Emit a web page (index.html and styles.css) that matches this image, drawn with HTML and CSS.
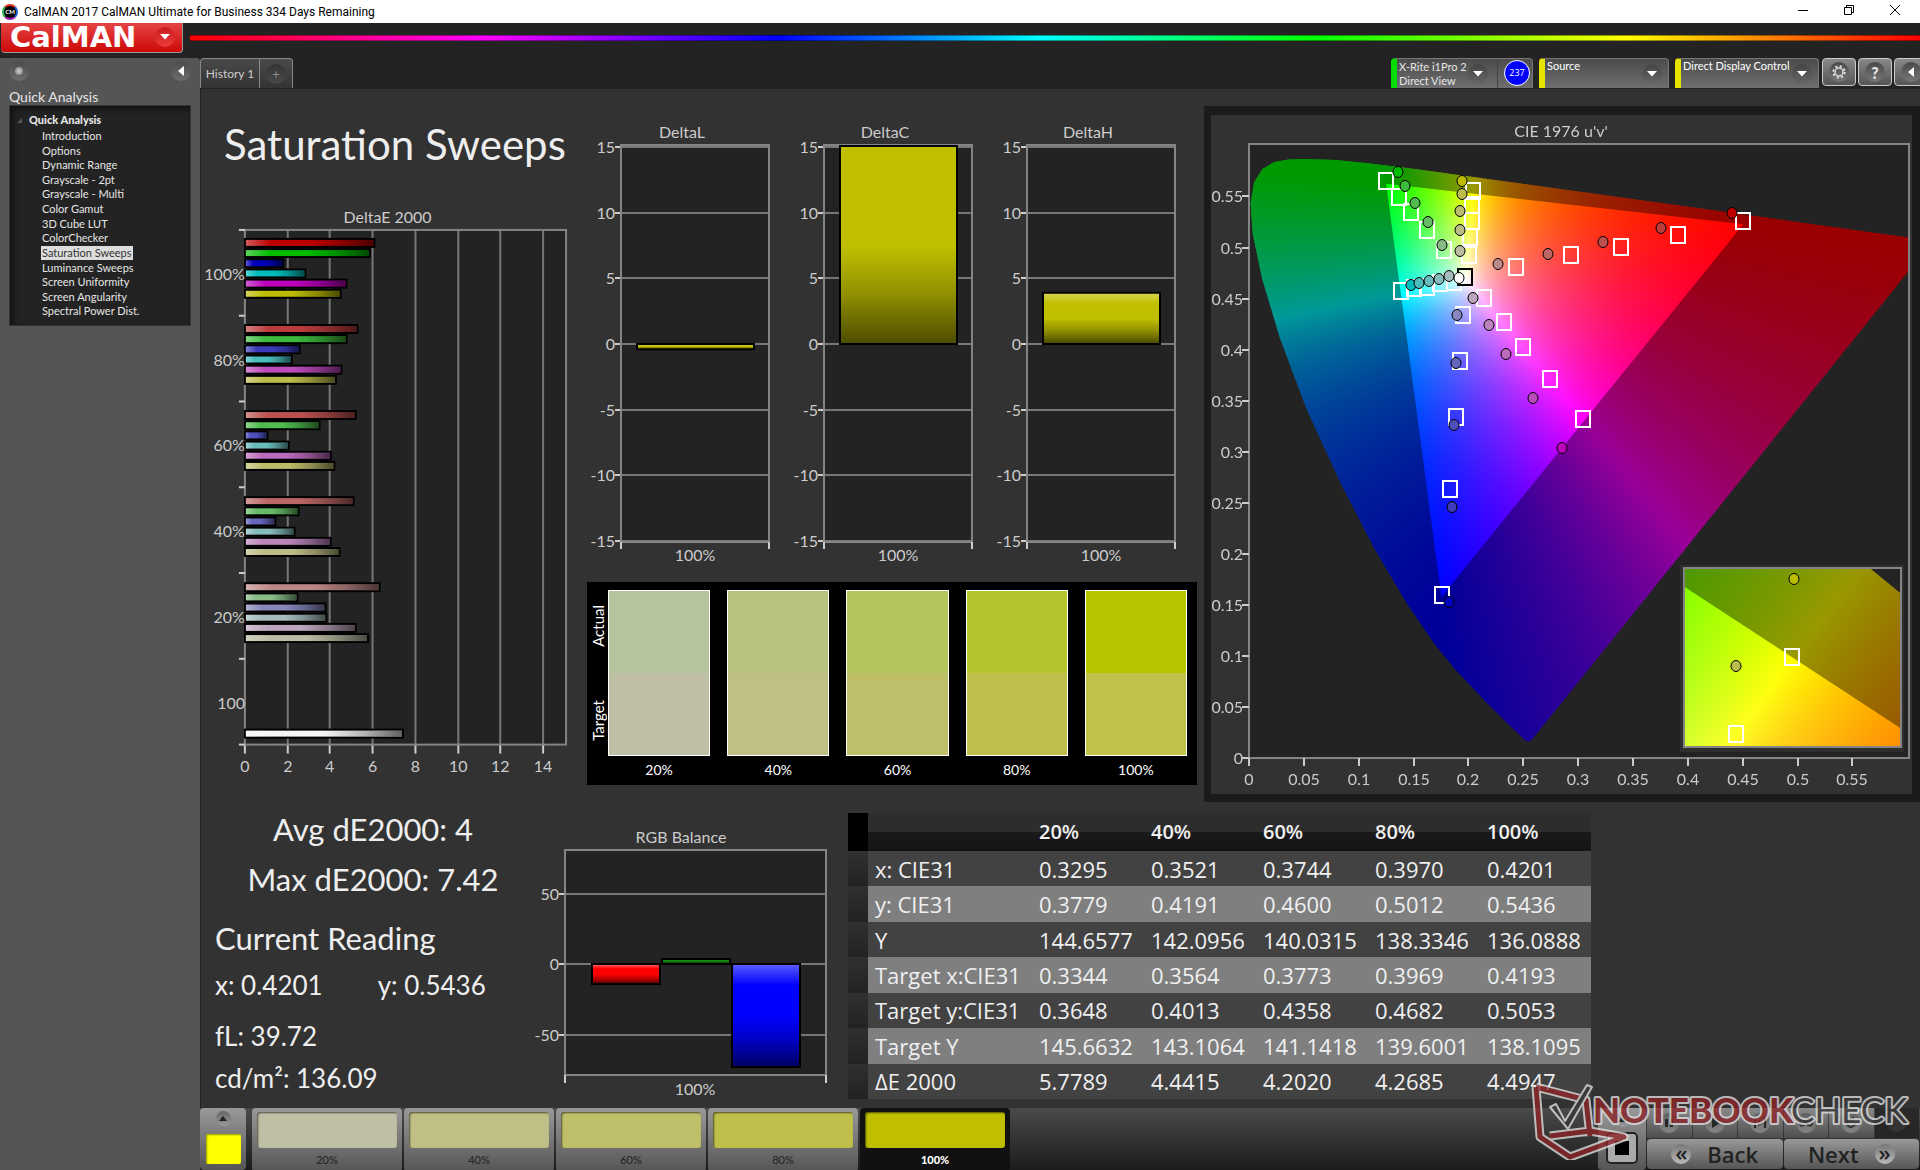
FILE: index.html
```html
<!DOCTYPE html>
<html lang="en">
<head>
<meta charset="utf-8">
<title>CalMAN 2017 CalMAN Ultimate for Business</title>
<link rel="stylesheet" href="styles.css">
</head>
<body>
<header class="titlebar">
  <span class="app-icon">CM</span>
  <span class="titlebar-text">CalMAN 2017 CalMAN Ultimate for Business 334 Days Remaining</span>
  <div class="window-controls">
    <button aria-label="Minimize"><svg width="12" height="12" viewBox="0 0 12 12"><path d="M1 6.500h10"/></svg></button>
    <button aria-label="Restore"><svg width="12" height="12" viewBox="0 0 12 12"><path d="M1.500 3.500h7v7h-7zM3.500 3.500v-2h7v7h-2"/></svg></button>
    <button aria-label="Close"><svg width="12" height="12" viewBox="0 0 12 12"><path d="M1 1l10 10M11 1L1 11"/></svg></button>
  </div>
</header>

<div class="brandbar">
  <button class="brand"><span>CalMAN</span><span class="round brand-arrow"><svg width="10" height="6" viewBox="0 0 10 6"><path d="M0 0h10L5 5.500z"/></svg></span></button>
  <div class="rainbow"></div>
</div>

<div class="shell">
  <nav class="sidebar" aria-label="Workflow">
    <div class="sidebar-top">
      <span class="round dot"><i></i></span>
      <button class="round" aria-label="Collapse"><svg width="6" height="10" viewBox="0 0 6 10"><path d="M6 0v10L0 5z"/></svg></button>
    </div>
    <h2>Quick Analysis</h2>
    <div class="tree">
      <a class="tree-root" href="#"><svg width="5" height="5" viewBox="0 0 5 5"><path d="M5 0v5H0z"/></svg>Quick Analysis</a>
      <ul>
        <li><a href="#">Introduction</a></li>
        <li><a href="#">Options</a></li>
        <li><a href="#">Dynamic Range</a></li>
        <li><a href="#">Grayscale - 2pt</a></li>
        <li><a href="#">Grayscale - Multi</a></li>
        <li><a href="#">Color Gamut</a></li>
        <li><a href="#">3D Cube LUT</a></li>
        <li><a href="#">ColorChecker</a></li>
        <li><a href="#" class="current">Saturation Sweeps</a></li>
        <li><a href="#">Luminance Sweeps</a></li>
        <li><a href="#">Screen Uniformity</a></li>
        <li><a href="#">Screen Angularity</a></li>
        <li><a href="#">Spectral Power Dist.</a></li>
      </ul>
    </div>
  </nav>

  <div class="work">
    <div class="toolbar">
      <div class="tabs">
        <button class="tab">History 1</button>
        <button class="tab tab-add" aria-label="Add history"><span class="round">+</span></button>
      </div>
      <div class="devices">
        <div class="device meter">
          <button class="device-pick">X-Rite i1Pro 2<br>Direct View<span class="round pick-arrow"><svg width="10" height="6" viewBox="0 0 10 6"><path d="M0 0h10L5 5.500z"/></svg></span></button>
          <span class="badge">237</span>
        </div>
        <label class="device source">
          <select aria-label="Source"><option>Source</option></select>
          <span class="round pick-arrow"><svg width="10" height="6" viewBox="0 0 10 6"><path d="M0 0h10L5 5.500z"/></svg></span>
        </label>
        <label class="device display">
          <select aria-label="Direct Display Control"><option>Direct Display Control</option></select>
          <span class="round pick-arrow"><svg width="10" height="6" viewBox="0 0 10 6"><path d="M0 0h10L5 5.500z"/></svg></span>
        </label>
        <button class="tool" aria-label="Settings"><span class="round"><svg width="14" height="14" viewBox="-7 -7 14 14"><g fill="none" stroke="#ddd"><circle r="4" stroke-width="1.500"/><circle r="5.700" stroke-width="2" stroke-dasharray="2.200 2.276"/></g></svg></span></button>
        <button class="tool" aria-label="Help"><span class="round">?</span></button>
        <button class="tool" aria-label="Collapse panel"><span class="round"><svg width="6" height="10" viewBox="0 0 6 10"><path d="M6 0v10L0 5z"/></svg></span></button>
      </div>
    </div>

    <main>
      <div class="top-row">
        <section class="errors">
          <h1>Saturation Sweeps</h1>
          <svg id="delta-e" class="chart" viewBox="0 0 386 590"></svg>
        </section>
        <section class="deltas">
          <div class="delta-row">
            <svg id="delta-l" class="chart" viewBox="0 0 203 458"></svg>
            <svg id="delta-c" class="chart" viewBox="0 0 203 458"></svg>
            <svg id="delta-h" class="chart" viewBox="0 0 203 458"></svg>
          </div>
          <div class="swatches">
            <div class="swatch-side"><span>Actual</span><span>Target</span></div>
            <figure><div class="pair s20"></div><figcaption>20%</figcaption></figure>
            <figure><div class="pair s40"></div><figcaption>40%</figcaption></figure>
            <figure><div class="pair s60"></div><figcaption>60%</figcaption></figure>
            <figure><div class="pair s80"></div><figcaption>80%</figcaption></figure>
            <figure><div class="pair s100"></div><figcaption>100%</figcaption></figure>
          </div>
        </section>
        <section class="cie">
          <canvas id="gamut" width="701" height="679"></canvas>
          <svg id="cie-marks" class="chart" viewBox="0 0 701 679"></svg>
        </section>
      </div>

      <div class="bottom-row">
        <section class="readings">
          <p class="big centered">Avg dE2000: 4</p>
          <p class="big centered">Max dE2000: 7.42</p>
          <h2 class="big">Current Reading</h2>
          <p class="xy"><span>x: 0.4201</span><span>y: 0.5436</span></p>
          <p class="luma">fL: 39.72</p>
          <p class="cd">cd/m²: 136.09</p>
        </section>
        <svg id="rgb" class="chart" viewBox="0 0 303 306"></svg>
        <table>
          <thead><tr><th class="handle"></th><th></th><th>20%</th><th>40%</th><th>60%</th><th>80%</th><th>100%</th></tr></thead>
          <tbody>
            <tr><td class="handle"></td><th>x: CIE31</th><td>0.3295</td><td>0.3521</td><td>0.3744</td><td>0.3970</td><td>0.4201</td></tr>
            <tr><td class="handle"></td><th>y: CIE31</th><td>0.3779</td><td>0.4191</td><td>0.4600</td><td>0.5012</td><td>0.5436</td></tr>
            <tr><td class="handle"></td><th>Y</th><td>144.6577</td><td>142.0956</td><td>140.0315</td><td>138.3346</td><td>136.0888</td></tr>
            <tr><td class="handle"></td><th>Target x:CIE31</th><td>0.3344</td><td>0.3564</td><td>0.3773</td><td>0.3969</td><td>0.4193</td></tr>
            <tr><td class="handle"></td><th>Target y:CIE31</th><td>0.3648</td><td>0.4013</td><td>0.4358</td><td>0.4682</td><td>0.5053</td></tr>
            <tr><td class="handle"></td><th>Target Y</th><td>145.6632</td><td>143.1064</td><td>141.1418</td><td>139.6001</td><td>138.1095</td></tr>
            <tr><td class="handle"></td><th>ΔE 2000</th><td>5.7789</td><td>4.4415</td><td>4.2020</td><td>4.2685</td><td>4.4947</td></tr>
          </tbody>
        </table>
      </div>
    </main>

    <footer class="dock">
      <button class="pattern" aria-label="Pattern window"><span class="round"><svg width="8" height="5" viewBox="0 0 8 5"><path d="M4 0l4 5H0z"/></svg></span><i></i></button>
      <div class="levels">
        <button class="level l20"><i></i>20%</button>
        <button class="level l40"><i></i>40%</button>
        <button class="level l60"><i></i>60%</button>
        <button class="level l80"><i></i>80%</button>
        <button class="level l100"><i></i>100%</button>
      </div>
      <div class="transport">
        <button class="stop" aria-label="Stop"><span class="round"><svg width="8" height="5" viewBox="0 0 8 5"><path d="M4 0l4 5H0z"/></svg></span><i></i></button>
        <div class="steps">
          <div class="icons">
            <button aria-label="Pause"><span class="round"><svg width="12" height="12" viewBox="0 0 12 12"><path d="M2 2h3v8H2zM7 2h3v8H7z"/></svg></span></button>
            <button aria-label="Play"><span class="round"><svg width="12" height="12" viewBox="0 0 12 12"><path d="M3 1l8 5-8 5z"/></svg></span></button>
            <button aria-label="Read series"><span class="round"><svg width="12" height="12" viewBox="0 0 12 12"><path d="M0 1h2v10H0zM10 1h2v10h-2zM4 3l5 3-5 3z"/></svg></span></button>
            <button aria-label="Read continuously"><span class="round"><svg width="14" height="8" viewBox="0 0 14 8"><path d="M7 4C5 1 1 0 1 4s4 3 6 0 6-4 6 0-4 3-6 0z" fill="none" stroke="#333" stroke-width="2"/></svg></span></button>
            <button aria-label="Repeat"><span class="round"><svg width="12" height="12" viewBox="0 0 12 12"><path d="M10 6a4 4 0 1 1-2-3.500M8 0v4H5" fill="none" stroke="#333" stroke-width="2"/></svg></span></button>
            <button aria-label="Unavailable" disabled><span class="round"></span></button>
          </div>
          <div class="moves">
            <button><span class="round">«</span>Back</button>
            <button>Next<span class="round">»</span></button>
          </div>
        </div>
      </div>
      <svg class="watermark" width="390" height="80" viewBox="0 0 390 80" aria-label="Notebookcheck">
        <g fill="none" stroke-linejoin="round">
          <g stroke="#ddd" stroke-width="9"><path d="M10 7l50 13 4 36M10 7l4 50 30 20 54-20-34-6-40 5"/></g>
          <g stroke="#8c2529" stroke-width="5"><path d="M10 7l50 13 4 36M10 7l4 50 30 20 54-20-34-6-40 5"/></g>
          <path d="M24 27l6-3 9 17L61 5l5 2-24 42z" fill="#3a3a3a" stroke="#ddd" stroke-width="2"/>
        </g>
        <text class="wm-note" x="67" y="43">NOTEBOOK</text>
        <text class="wm-check" x="265" y="43">CHECK</text>
      </svg>
    </footer>
  </div>
</div>
<script src="charts.js"></script>
</body>
</html>
```

FILE: styles.css
```css
* { box-sizing: border-box; }

body {
  margin: 0;
  min-height: 100vh;
  display: flex;
  flex-direction: column;
  overflow-x: hidden;
  background: #232323;
  color: #e6e6e6;
  font: 12px/15px Lato, "Open Sans", sans-serif;
}

button, select {
  margin: 0;
  padding: 0;
  border: 0;
  background: none;
  color: inherit;
  font: inherit;
}

h1, h2, p, ul, figure { margin: 0; padding: 0; font-weight: 400; }
a { color: inherit; text-decoration: none; }
svg { display: block; fill: #fff; }

.round {
  display: inline-flex;
  align-items: center;
  justify-content: center;
  flex: none;
  width: 20px;
  height: 20px;
  border-radius: 50%;
  background: linear-gradient(#4a4a4a, #777);
}

/* Window title bar */
.titlebar {
  display: flex;
  align-items: center;
  height: 23px;
  background: #fff;
  color: #000;
  font: 12px/20px Roboto, "Open Sans", sans-serif;
}
.app-icon {
  width: 16px;
  height: 16px;
  margin: 0 6px 0 2px;
  border: 2px solid;
  border-color: #e0301e #1a62d6 #a21caf #33b249;
  border-radius: 50%;
  background: #000;
  color: #fff;
  font: bold 6px/12px Lato, sans-serif;
  text-align: center;
}
.window-controls { display: flex; margin: 0 19px 3px auto; gap: 34px; }
.window-controls svg { fill: none; stroke: #000; }

/* Brand strip */
.brandbar { display: flex; height: 35px; }
.brand {
  display: flex;
  align-items: center;
  justify-content: space-between;
  width: 182px;
  height: 30px;
  margin-left: 1px;
  padding: 0 7px 2px 9px;
  border: solid #999;
  border-width: 0 1px 1px 0;
  border-radius: 0 0 4px 4px;
  background: linear-gradient(#e64444, #cc0808);
  color: #fff;
  font: bold 29px/28px "DejaVu Sans", sans-serif;
}
.brand-arrow { background: linear-gradient(#c81d1d, #ee3c3c); }
.rainbow {
  flex: 1;
  height: 6px;
  margin: 12px 0 0 7px;
  border: solid rgba(0, 0, 0, .4);
  border-width: 1px 0;
  background: linear-gradient(90deg, #f00, #f0f 17%, #00f 34%, #0ff 49%, #0f0 65%, #ff0 83%, #f00);
}

/* Sidebar */
.shell { display: flex; flex: 1; }
.sidebar { flex: none; width: 200px; padding: 3px 9px; background: #555; border-radius: 0 4px 0 0; }
.sidebar-top { display: flex; justify-content: space-between; height: 27px; }
.sidebar-top .round { background: linear-gradient(#4b4b4b, #6d6d6d); }
.dot i { width: 8px; height: 8px; border-radius: 50%; background: radial-gradient(#ccc, #777); }
.sidebar h2 { font-size: 14px; line-height: 17px; }
.tree {
  height: 221px;
  padding: 7px 6px;
  border: 1px solid #333;
  background: #232323;
  box-shadow: inset 3px 3px 6px #111;
}
.tree-root { display: flex; align-items: center; gap: 7px; padding-left: 1px; font-weight: 900; font-size: 11px; line-height: 14px; }
.tree-root svg { fill: #555; }
.tree ul { display: grid; grid-auto-rows: 1fr; height: 190px; margin-top: 2px; padding-left: 25px; list-style: none; font-size: 11px; line-height: 14px; }
.tree li a { display: inline-block; padding: 0 1px; }
.tree .current { background: #ddd; color: #333; }

/* Toolbar */
.work { display: flex; flex: 1; flex-direction: column; min-width: 0; }
.toolbar { display: flex; justify-content: space-between; height: 30px; overflow: hidden; }
.tabs, .devices { display: flex; }
.tab {
  width: 60px;
  border: solid #888;
  border-width: 1px 1px 0;
  border-radius: 4px 0 0 0;
  background: linear-gradient(#4a4a4a, #333);
  color: #ccc;
  font-size: 12px;
}
.tab-add { width: 33px; border-left: 0; border-radius: 0 4px 0 0; color: #888; }
.tab-add .round { background: linear-gradient(#333, #4a4a4a); font-size: 14px; }
.devices { margin-right: -10px; }
.device {
  display: flex;
  position: relative;
  margin-right: 6px;
  border: solid #777;
  border-width: 1px 1px 0;
  border-left: 6px solid #e5e500;
  border-radius: 4px 4px 0 0;
  background: linear-gradient(#4c4c4c, #6e6e6e);
  font-size: 11px;
  line-height: 14px;
}
.meter { width: 142px; border-left-color: #0d0; }
.source { width: 130px; }
.display { width: 144px; margin-right: 3px; }
.device-pick { width: 101px; padding-left: 2px; border-right: 1px solid #444; text-align: left; }
.device select { width: 100%; height: 14px; padding-left: 2px; appearance: none; color: #fff; }
.pick-arrow { position: absolute; top: 5px; right: 6px; background: linear-gradient(#444, #666); }
.meter .pick-arrow { right: 44px; }
.badge {
  width: 26px;
  height: 26px;
  margin: 1px 0 0 6px;
  border: 1px solid #fff;
  border-radius: 50%;
  background: #00f;
  color: #fff;
  font: 9px/24px "Open Sans", sans-serif;
  text-align: center;
}
.tool {
  width: 34px;
  height: 28px;
  margin-right: 2px;
  border: 1px solid #ccc;
  border-radius: 4px;
  background: linear-gradient(#888, #555);
  font-size: 16px;
  font-weight: 900;
}

/* Workspace */
main { flex: 1; border: solid #222; border-width: 1px 0 0 1px; background: #323232; }
.top-row { display: grid; grid-template-columns: 385fr 618fr 716fr; align-items: start; }
.chart { width: 100%; height: auto; overflow: visible; font-size: 16px; }
h1 { height: 116px; padding: 24px 0 0 23px; color: #eee; font-size: 42px; line-height: 62px; white-space: nowrap; }
.deltas { padding: 29px 7px 0 1px; }
.delta-row { display: grid; grid-template-columns: repeat(3, 1fr); margin: 0 2px 6px -1px; }
.swatches { display: flex; height: 203px; padding: 8px 10px 0 2px; background: #000; color: #fff; }
.swatch-side { display: flex; flex: none; width: 19px; height: 166px; padding: 15px 0; flex-direction: column; justify-content: space-between; }
.swatch-side span { writing-mode: vertical-rl; transform: rotate(180deg); font-size: 15px; line-height: 19px; }
.swatches figure { flex: 1; text-align: center; }
.swatches figure + figure { margin-left: 17px; }
.pair { height: 166px; border: 1px solid #fff; }
figcaption { font-size: 14px; line-height: 28px; }
.s20 { background: linear-gradient(#b4c49e 50%, #bfbfa5 50%); }
.s40 { background: linear-gradient(#b5c37e 50%, #bfbf86 50%); }
.s60 { background: linear-gradient(#b3c45d 50%, #bfbf6a 50%); }
.s80 { background: linear-gradient(#b4c42c 50%, #bfc04b 50%); }
.s100 { background: linear-gradient(#b7c500 50%, #c1c249 50%); }

.cie {
  display: grid;
  margin-top: 17px;
  border: solid #1b1b1b;
  border-width: 9px 8px 8px 7px;
}
.cie canvas, .cie svg { grid-area: 1 / 1; width: 100%; }

.bottom-row { display: grid; grid-template-columns: 344fr 303fr 743fr 329fr; align-items: start; }
.readings { padding: 7px 0 0 14px; color: #eee; font-size: 26px; line-height: 40px; white-space: nowrap; }
.big { font-size: 31px; margin-bottom: 10px; }
.centered { width: 316px; text-align: center; }
.readings h2 { margin: 19px 0 7px; }
.xy { display: flex; gap: 55px; }
.luma { margin: 11px 0 2px; }

table {
  width: 100%;
  height: 286px;
  margin-top: 11px;
  border-collapse: collapse;
  table-layout: fixed;
  background: #424242;
  color: #f0f0f0;
  font: 22px/30px "Open Sans", sans-serif;
}
thead { background: linear-gradient(#2d2d2d 50%, #1a1a1a 50%, #141414); font-size: 20px; }
thead tr { height: 38px; }
th, td { padding: 0; font-weight: 400; text-align: left; white-space: nowrap; }
thead th:nth-child(n+3) { width: 112px; font-weight: 600; }
thead .handle { width: 20px; background: #000; }
thead th:nth-child(2) { width: 171px; }
thead th:last-child { width: 104px; }
tbody th { padding-left: 7px; }
tbody tr:nth-child(even) { background: #7f7f7f; }
.handle { background: linear-gradient(#303030, #222); }

/* Bottom dock */
.dock { position: relative; display: flex; height: 62px; background: linear-gradient(#4a4a4a, #1c1c1c); }
.dock button { border-radius: 4px; background: linear-gradient(#999, #555); color: #222; }
.dock .round { background: linear-gradient(#666, #999); }
.dock .round svg { fill: #222; }
.pattern { display: flex; flex-direction: column; align-items: center; gap: 8px; width: 46px; margin-right: 6px; padding-top: 3px; }
.pattern .round, .stop .round { width: 15px; height: 15px; }
.pattern i { width: 35px; height: 30px; border-radius: 2px; background: #ff0; box-shadow: inset 1px 1px 2px #990; }
.levels { display: grid; grid-template-columns: repeat(5, 150px); gap: 2px; }
.level { padding: 4px 5px 5px; font-size: 11px; }
.level i { display: block; height: 36px; margin-bottom: 4px; border-radius: 3px; box-shadow: inset 1px 1px 2px rgba(0, 0, 0, .6); }
.l20 i { background: #bfbfa5; }
.l40 i { background: #bfbf86; }
.l60 i { background: #bfbf6a; }
.l80 i { background: #bfc04b; }
.l100 i { background: #bfbf00; }
.dock .l100 { background: #111; color: #fff; font-weight: 900; }
.transport { display: flex; margin: 0 1px 0 auto; gap: 1px; }
.stop { display: flex; flex-direction: column; align-items: center; gap: 6px; width: 48px; padding-top: 4px; }
.stop i { width: 30px; height: 30px; border: 8px solid #aaa; outline: 2px solid #222; outline-offset: -1px; border-radius: 4px; background: #000; }
.steps { display: grid; grid-template-rows: 30px 30px; gap: 1px; width: 272px; }
.icons { display: grid; grid-template-columns: repeat(6, 1fr); gap: 1px; }
.icons button { opacity: .8; border-radius: 0; }
.dock .icons button:disabled { background: #222; }
.icons button:disabled .round { background: #333; }
.moves { display: grid; grid-template-columns: 1fr 1fr; gap: 1px; }
.moves button { display: flex; align-items: center; justify-content: center; gap: 16px; font: 600 22px/28px "Open Sans", sans-serif; }
.moves .round { padding-bottom: 4px; background: linear-gradient(#777, #bbb); }
.watermark { position: absolute; right: 4px; bottom: 10px; opacity: .8; pointer-events: none; }
.watermark text { paint-order: stroke; stroke: #ddd; stroke-width: 4px; stroke-linejoin: round; }
.wm-note { fill: #8c2529; font: 900 35px Lato, sans-serif; }
.wm-check { fill: #3a3a3a; font: 400 35px Lato, sans-serif; }

/* Charts */
.plot { fill: #232323; }
.frame { fill: none; stroke: #848484; stroke-width: 2; }
.grid { stroke: #777; stroke-width: 2; }
.tick { stroke: #ccc; stroke-width: 2; }
.label { fill: #ccc; }
.bar { stroke: #000; stroke-width: 2; }
.target { fill: none; stroke: #fff; stroke-width: 2; }
.target.white { stroke: #000; }
.reading { stroke: #000; stroke-width: 1; }
```

FILE: charts.js
```js
const NS = 'http://www.w3.org/2000/svg';

function add(parent, tag, attrs, text) {
  const el = document.createElementNS(NS, tag);
  for (const key in attrs) el.setAttribute(key, attrs[key]);
  if (text !== undefined) el.textContent = text;
  parent.appendChild(el);
  return el;
}
const line = (s, c, x1, y1, x2, y2) => add(s, 'line', { class: c, x1, y1, x2, y2 });
const label = (s, x, y, text, anchor) =>
  add(s, 'text', { class: 'label', x, y, 'text-anchor': anchor || 'middle' }, text);

// Glossy shading laid over the flat bar colour
function gloss(svg, id, vertical, light) {
  const g = add(svg, 'linearGradient', { id, x1: 0, y1: 0, x2: vertical ? 0 : 1, y2: vertical ? 1 : 0 });
  [[0, '#fff', light], [0.2, '#fff', 0], [0.5, '#000', 0], [0.75, '#000', 0.25], [1, '#000', 0.6]].forEach(
    ([offset, color, opacity]) => add(g, 'stop', { offset, 'stop-color': color, 'stop-opacity': opacity }));
}
function bar(svg, x, y, width, height, color, shade) {
  add(svg, 'rect', { class: 'bar', x, y, width, height, fill: color });
  add(svg, 'rect', { x: x + 1, y: y + 1, width: width - 2, height: height - 2, fill: `url(#${shade})` });
}

// Hue order: red, green, blue, cyan, magenta, yellow
const HUES = [[1, 0, 0], [0, 1, 0], [0, 0, 1], [0, 1, 1], [1, 0, 1], [1, 1, 0]];
const LOW_ONE = [0, 60, 80, 102, 135];
const LOW_TWO = [0, 75, 106, 134, 165];
function shadeOf(hue, level) {
  const low = (hue < 3 ? LOW_ONE : LOW_TWO)[level];
  return `rgb(${HUES[hue].map(c => (c ? 188 : low)).join(',')})`;
}

function drawDeltaE() {
  const svg = document.getElementById('delta-e');
  gloss(svg, 'gloss-e', false, 0.35);
  const x0 = 44, top = 25, bottom = 541, right = 366, unit = 21.36;
  add(svg, 'rect', { class: 'plot', x: x0, y: top, width: right - x0, height: bottom - top });
  for (let v = 0; v <= 14; v += 2) {
    const x = Math.round(x0 + v * unit);
    if (v) line(svg, 'grid', x, top, x, bottom);
    line(svg, 'tick', x, bottom, x, bottom + 9);
    label(svg, x, bottom + 27, v);
  }
  add(svg, 'rect', { class: 'frame', x: x0, y: top, width: right - x0, height: bottom - top });
  const rows = [
    [6.08, 5.86, 1.8, 2.84, 4.77, 4.49],
    [5.29, 4.77, 2.57, 2.2, 4.53, 4.27],
    [5.2, 3.5, 1.06, 2.06, 4.03, 4.2],
    [5.1, 2.52, 1.43, 2.33, 4.03, 4.44],
    [6.32, 2.47, 3.78, 3.82, 5.2, 5.78]
  ];
  rows.forEach((row, level) => row.forEach((v, hue) =>
    bar(svg, x0, 34 + level * 86.3 + hue * 10.2, v * unit, 8, shadeOf(hue, level), 'gloss-e')));
  bar(svg, x0, 526, 7.42 * unit, 8, '#f6f4f4', 'gloss-e');
  for (let i = 0; i <= 6; i++) line(svg, 'tick', x0 - 6, top + i * 86, x0, top + i * 86);
  ['100%', '80%', '60%', '40%', '20%', '100'].forEach((t, i) => label(svg, x0, 75 + i * 86, t, 'end'));
  label(svg, 187, 18, 'DeltaE 2000');
}

function drawDelta(id, title, value) {
  const svg = document.getElementById(id);
  gloss(svg, 'gloss-' + id, true, value > 15 ? 0 : 0.3);
  const left = 35, right = 183, top = 27, bottom = 424, zero = 226, unit = 13.13;
  add(svg, 'rect', { class: 'plot', x: left, y: top, width: right - left, height: bottom - top });
  for (let v = 15; v >= -15; v -= 5) {
    const y = Math.round(zero - v * unit);
    line(svg, 'grid', left, y, right, y);
    line(svg, 'tick', left - 6, y, left, y);
    label(svg, left - 6, y + 6, v, 'end');
  }
  add(svg, 'rect', { class: 'frame', x: left, y: top, width: right - left, height: bottom - top });
  const h = Math.min(Math.abs(value) * unit, zero - top - 1);
  bar(svg, 51, value > 0 ? zero - h : zero, 117, h, '#c0c000', 'gloss-' + id);
  line(svg, 'tick', left, bottom, left, bottom + 7);
  line(svg, 'tick', right, bottom, right, bottom + 7);
  label(svg, 96, 20, title);
  label(svg, 109, 443, '100%');
}

function drawRgb() {
  const svg = document.getElementById('rgb');
  gloss(svg, 'gloss-rgb', true, 0.35);
  add(svg, 'rect', { class: 'plot', x: 20, y: 48, width: 261, height: 225 });
  [[50, 92], [0, 162], [-50, 233]].forEach(([v, y]) => {
    line(svg, 'grid', 20, y, 281, y);
    line(svg, 'tick', 14, y, 20, y);
    label(svg, 14, y + 6, v, 'end');
  });
  add(svg, 'rect', { class: 'frame', x: 20, y: 48, width: 261, height: 225 });
  bar(svg, 47, 162, 68, 20, '#f00', 'gloss-rgb');
  bar(svg, 117, 157, 68, 5, '#0a800a', 'gloss-rgb');
  bar(svg, 187, 162, 68, 103, '#00f', 'gloss-rgb');
  line(svg, 'tick', 20, 273, 20, 281);
  line(svg, 'tick', 281, 273, 281, 281);
  label(svg, 136, 41, 'RGB Balance');
  label(svg, 150, 293, '100%');
}

// Spectral locus, CIE 1931 xy
const LOCUS = [
  [.1741, .005], [.1714, .0051], [.1644, .0109], [.1566, .0177], [.144, .0297], [.1355, .0399], [.1241, .0578],
  [.1096, .0868], [.0913, .1327], [.0687, .2007], [.0454, .295], [.0235, .4127], [.0082, .5384], [.0039, .6548],
  [.0139, .7502], [.0389, .812], [.0743, .8338], [.1142, .8262], [.1547, .8059], [.2296, .7543], [.3016, .6923],
  [.3731, .6245], [.4441, .5547], [.5125, .4866], [.5752, .4242], [.627, .3725], [.6658, .334], [.6915, .3083],
  [.719, .2809], [.7347, .2653]
];
const PRIMARIES = [[.64, .33], [.3, .6], [.15, .06]];

function toUv([x, y]) {
  const d = -2 * x + 12 * y + 3;
  return [4 * x / d, 9 * y / d];
}
function toXy([u, v]) {
  const d = 6 * u - 16 * v + 12;
  return [9 * u / d, 4 * v / d];
}
function colorAt([x, y]) {
  y = Math.max(y, 1e-4);
  const X = x / y, Z = (1 - x - y) / y;
  const rgb = [
    3.2406 * X - 1.5372 - 0.4986 * Z,
    -0.9689 * X + 1.8758 + 0.0415 * Z,
    0.0557 * X - 0.204 + 1.057 * Z
  ].map(c => Math.max(c, 0));
  const peak = Math.max(...rgb);
  return rgb.map(c => 255 * c / peak);
}

// box: pixel rectangle; toPx / fromPx: chromaticity <-> pixels inside it
function paintGamut(ctx, box, toPx, fromPx) {
  const [bx, by, w, h] = box;
  const full = document.createElement('canvas');
  full.width = w;
  full.height = h;
  const fctx = full.getContext('2d');
  const img = fctx.createImageData(w, h);
  for (let j = 0; j < h; j++) {
    for (let i = 0; i < w; i++) {
      const c = colorAt(fromPx(i, j));
      img.data.set([c[0], c[1], c[2], 255], (j * w + i) * 4);
    }
  }
  fctx.putImageData(img, 0, 0);
  const region = points => {
    const p = new Path2D();
    points.map(toPx).forEach(([x, y]) => p.lineTo(x + bx, y + by));
    p.closePath();
    return p;
  };
  ctx.fillStyle = '#232323';
  ctx.fillRect(bx, by, w, h);
  ctx.save();
  ctx.clip(region(LOCUS));
  ctx.drawImage(full, bx, by);
  ctx.fillStyle = 'rgba(0,0,0,.4)';
  ctx.fillRect(bx, by, w, h);
  ctx.restore();
  ctx.save();
  ctx.beginPath();
  ctx.rect(bx, by, w, h);
  ctx.clip();
  ctx.clip(region(PRIMARIES));
  ctx.drawImage(full, bx, by);
  ctx.restore();
}

function drawCie() {
  const ctx = document.getElementById('gamut').getContext('2d');
  const sx = 1097, sy = 1021, ox = 38, oy = 643, top = 29;
  paintGamut(ctx, [ox, top, 660, oy - top],
    p => { const [u, v] = toUv(p); return [u * sx, oy - top - v * sy]; },
    (i, j) => toXy([i / sx, (oy - top - j) / sy]));
  ctx.fillStyle = '#2e2e2e';
  ctx.fillRect(469, 450, 224, 187);
  paintGamut(ctx, [473, 453, 217, 179],
    ([x, y]) => [(x - .3761) * 2500, (.5485 - y) * 2060],
    (i, j) => [.3761 + i / 2500, .5485 - j / 2060]);

  const svg = document.getElementById('cie-marks');
  add(svg, 'rect', { class: 'frame', x: ox, y: top, width: 660, height: oy - top });
  add(svg, 'rect', { class: 'frame', x: 473, y: 453, width: 217, height: 179 });
  for (let k = 0; k <= 11; k++) {
    const t = String(k * 5 / 100), x = Math.round(ox + k * 54.85), y = Math.round(oy - k * 51.05);
    line(svg, 'tick', x, oy, x, oy + 8);
    label(svg, x, oy + 27, t);
    line(svg, 'tick', ox - 7, y, ox, y);
    label(svg, ox - 6, y + 6, t, 'end');
  }
  label(svg, 350, 22, "CIE 1976 u'v'");

  // From most to least saturated, hues in HUES order
  const targets = [
    [[532, 106], [467, 120], [410, 132], [360, 140], [305, 152]],
    [[175, 66], [188, 82], [200, 97], [216, 115], [233, 135]],
    [[231, 480], [239, 374], [245, 302], [249, 246], [252, 200]],
    [[190, 176], [203, 173], [216, 172], [229, 168], [243, 167]],
    [[372, 304], [339, 264], [312, 232], [293, 207], [273, 183]],
    [[262, 76], [261, 90], [261, 106], [259, 122], [258, 140]]
  ];
  const readings = [
    [[521, 98], [450, 113], [392, 127], [337, 139], [287, 149]],
    [[187, 57], [194, 71], [204, 88], [217, 107], [231, 130]],
    [[238, 487], [241, 392], [243, 310], [245, 248], [246, 200]],
    [[200, 170], [208, 168], [218, 166], [228, 164], [238, 161]],
    [[351, 333], [322, 283], [295, 239], [278, 210], [262, 183]],
    [[251, 66], [251, 79], [249, 96], [249, 115], [249, 136]]
  ];
  const square = (x, y, c) => add(svg, 'rect', { class: c || 'target', x: x - 7, y: y - 8, width: 14, height: 16 });
  const dot = (x, y, fill) => add(svg, 'ellipse', { class: 'reading', cx: x, cy: y, rx: 5, ry: 5.5, fill });
  targets.forEach(row => row.forEach(([x, y]) => square(x, y)));
  square(254, 162, 'target white');
  readings.forEach((row, hue) => row.forEach(([x, y], level) => dot(x, y, shadeOf(hue, level))));
  dot(248, 163, '#fff');
  square(581, 542);
  square(525, 619);
  dot(583, 464, shadeOf(5, 0));
  dot(525, 551, shadeOf(5, 1));
}

drawDeltaE();
drawDelta('delta-l', 'DeltaL', -0.4);
drawDelta('delta-c', 'DeltaC', 16);
drawDelta('delta-h', 'DeltaH', 3.9);
drawRgb();
drawCie();
```
